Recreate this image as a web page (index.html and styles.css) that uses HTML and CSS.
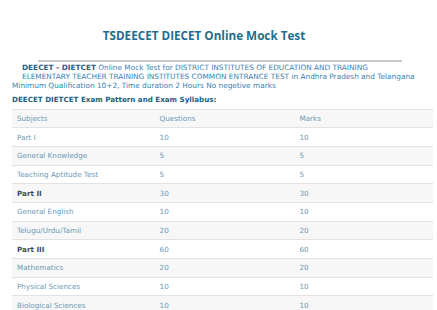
FILE: index.html
```html
<!DOCTYPE html>
<html>
<head>
<meta charset="utf-8">
<link rel="stylesheet" href="styles.css">
</head>
<body>
<div class="page">
  <h1 class="title">TSDEECET DIECET Online Mock Test</h1>
  <hr class="rule">
  <div class="intro">
    <div class="indent"><b>DEECET - DIETCET</b> Online Mock Test for DISTRICT INSTITUTES OF EDUCATION AND TRAINING</div>
    <div class="indent">ELEMENTARY TEACHER TRAINING INSTITUTES COMMON ENTRANCE TEST in Andhra Pradesh and Telangana</div>
    <div>Minimum Qualification 10+2, Time duration 2 Hours No negetive marks</div>
  </div>
  <h2 class="sub">DEECET DIETCET Exam Pattern and Exam Syllabus:</h2>
  <table class="grid">
    <tr><td>Subjects</td><td>Questions</td><td>Marks</td></tr>
    <tr><td>Part I</td><td>10</td><td>10</td></tr>
    <tr><td>General Knowledge</td><td>5</td><td>5</td></tr>
    <tr><td>Teaching Aptitude Test</td><td>5</td><td>5</td></tr>
    <tr><td><b>Part II</b></td><td>30</td><td>30</td></tr>
    <tr><td>General English</td><td>10</td><td>10</td></tr>
    <tr><td>Telugu/Urdu/Tamil</td><td>20</td><td>20</td></tr>
    <tr><td><b>Part III</b></td><td>60</td><td>60</td></tr>
    <tr><td>Mathematics</td><td>20</td><td>20</td></tr>
    <tr><td>Physical Sciences</td><td>10</td><td>10</td></tr>
    <tr><td>Biological Sciences</td><td>10</td><td>10</td></tr>
  </table>
</div>
</body>
</html>
```
FILE: styles.css
```css
html, body { margin: 0; padding: 0; background: #fff; }
body { font-family: "DejaVu Sans", Verdana, sans-serif; }
.page { padding: 0 4px 0 12px; }
.title {
  margin: 0;
  padding: 28px 37px 0 0;
  text-align: center;
  font-family: "Open Sans", "DejaVu Sans", sans-serif;
  font-weight: 700;
  font-size: 11.7px;
  line-height: 14px;
  color: #1f6e8c;
}
.rule {
  margin: 18px 31px 0 26px;
  border: 0;
  border-top: 2px solid #c8c8c8;
  height: 0;
}
.intro {
  margin-top: 1px;
  font-size: 7.35px;
  line-height: 9.2px;
  color: #3a80b0;
  white-space: nowrap;
}
.intro b { color: #2b5e7d; }
.indent { padding-left: 10px; }
.sub {
  margin: 4px 0 0;
  font-size: 7.15px;
  line-height: 10px;
  font-weight: 700;
  color: #245f80;
}
.grid {
  margin-top: 4px;
  width: 421px;
  border-collapse: collapse;
  font-size: 7.2px;
  color: #6b98b4;
}
.grid td {
  width: 140px;
  height: 17.7px;
  padding: 0 5px;
  border-top: 1px solid #e2e2e2;
  vertical-align: middle;
}
.grid tr:nth-child(odd) td { background: #f7f7f7; }
.grid b { color: #3a4f5e; }
```
